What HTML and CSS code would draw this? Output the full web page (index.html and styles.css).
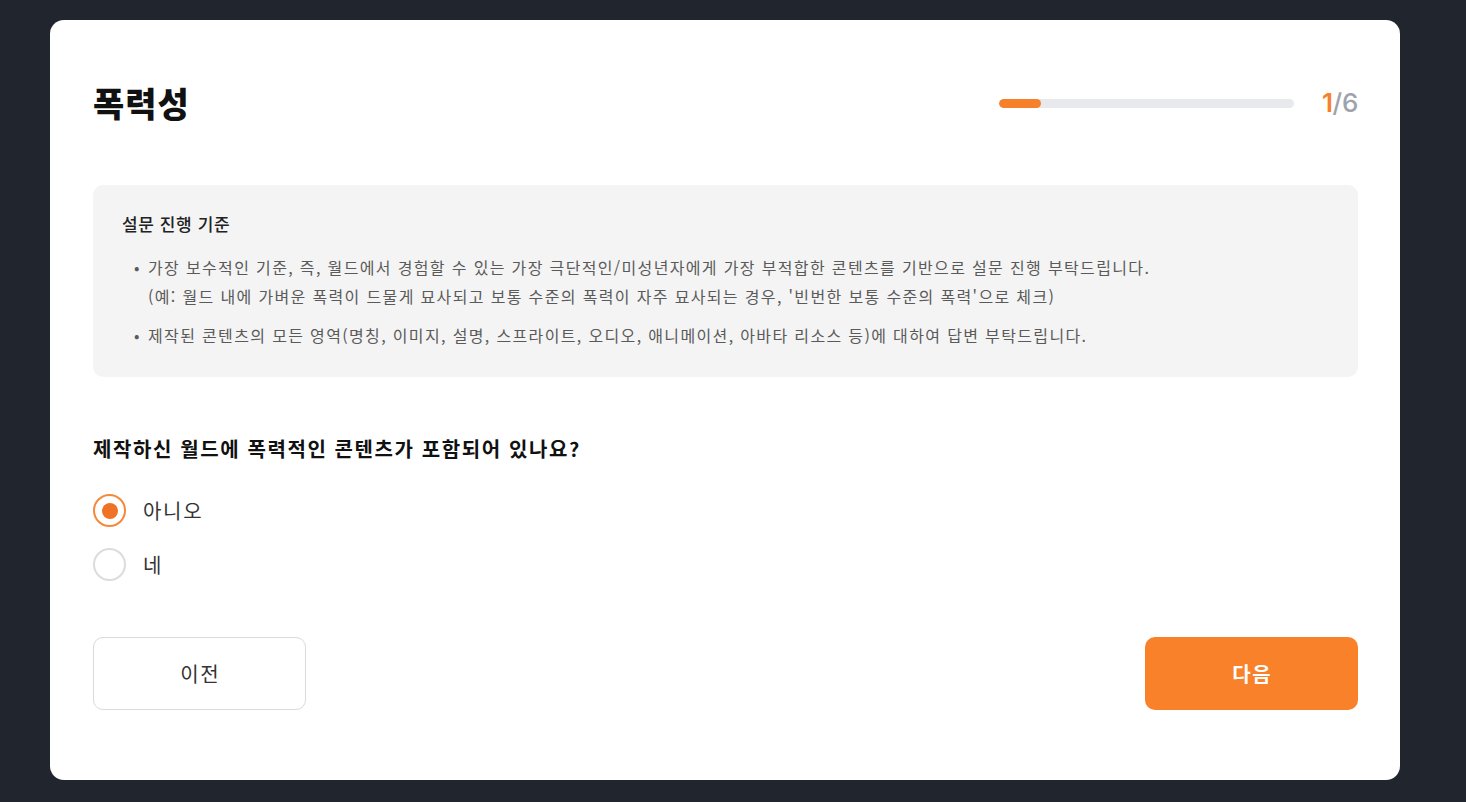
FILE: index.html
```html
<!DOCTYPE html>
<html lang="ko">
<head>
<meta charset="utf-8">
<title>폭력성</title>
<link rel="stylesheet" href="styles.css">
</head>
<body>
<div class="card">
  <div class="header">
    <h1 class="title">폭력성</h1>
    <div class="progress">
      <div class="bar"><div class="fill" style="width: 42px"></div></div>
      <div class="count"><span class="cur">1</span>/6</div>
    </div>
  </div>
  <div class="info">
    <div class="info-title">설문 진행 기준</div>
    <ul class="info-list">
      <li><span>가장 보수적인 기준, 즉, 월드에서 경험할 수 있는 가장 극단적인/미성년자에게 가장 부적합한 콘텐츠를 기반으로 설문 진행 부탁드립니다.<br>(예: 월드 내에 가벼운 폭력이 드물게 묘사되고 보통 수준의 폭력이 자주 묘사되는 경우, '빈번한 보통 수준의 폭력'으로 체크)</span></li>
      <li><span>제작된 콘텐츠의 모든 영역(명칭, 이미지, 설명, 스프라이트, 오디오, 애니메이션, 아바타 리소스 등)에 대하여 답변 부탁드립니다.</span></li>
    </ul>
  </div>
  <div class="question">제작하신 월드에 폭력적인 콘텐츠가 포함되어 있나요?</div>
  <div class="options">
    <label class="option"><span class="radio checked"></span><span class="label">아니오</span></label>
    <label class="option"><span class="radio"></span><span class="label">네</span></label>
  </div>
  <div class="actions">
    <button class="btn btn-prev"><span class="btn-text">이전</span></button>
    <button class="btn btn-next"><span class="btn-text">다음</span></button>
  </div>
</div>
</body>
</html>
```
FILE: styles.css
```css
* { box-sizing: border-box; }
html, body { margin: 0; padding: 0; }
body {
  background: #21252e;
  width: 1466px;
  height: 802px;
  overflow: hidden;
  padding: 20px 0 0 50px;
  font-family: "Noto Sans CJK KR", "Noto Sans", sans-serif;
  color: #222;
}
.card {
  width: 1350px;
  height: 760px;
  background: #fff;
  border-radius: 14px;
  padding: 43px 42px 0 43px;
}
.header {
  height: 80px;
  display: flex;
  align-items: center;
  justify-content: space-between;
}
.title {
  margin: 0;
  font-size: 34px;
  font-weight: 800;
  color: #111;
  line-height: 40px;
  letter-spacing: 1px;
}
.progress {
  display: flex;
  align-items: center;
  gap: 28px;
}
.bar {
  width: 295px;
  height: 9px;
  border-radius: 5px;
  background: #e8e9ed;
  overflow: hidden;
}
.fill {
  height: 100%;
  background: #f7802a;
  border-radius: 5px;
}
.count {
  font-family: Inter, "Open Sans", sans-serif;
  font-size: 26px;
  font-weight: 500;
  color: #9ea3ab;
  line-height: 30px;
  letter-spacing: -0.3px;
}
.count .cur { color: #f7802a; font-weight: 600; }
.info {
  margin-top: 42px;
  background: #f4f4f4;
  border-radius: 10px;
  padding: 27px 29px 27px 29px;
  height: 192px;
}
.info-title {
  font-size: 17px;
  font-weight: 500;
  line-height: 24px;
  color: #222;
  letter-spacing: 0.6px;
}
.info-list {
  list-style: none;
  margin: 17px 0 0 0;
  padding: 0;
}
.info-list li {
  display: flex;
  font-size: 16px;
  line-height: 29px;
  color: #5a5a5a;
  letter-spacing: 1.35px;
}
.info-list li + li { margin-top: 10px; }
.info-list li::before {
  content: "•";
  width: 14px;
  margin-left: 12px;
  flex: none;
  letter-spacing: 0;
  color: #5a5a5a;
}
.question {
  margin-top: 58px;
  font-size: 20px;
  font-weight: 700;
  line-height: 28px;
  color: #111;
  letter-spacing: 1.6px;
}
.options {
  margin-top: 31px;
  display: flex;
  flex-direction: column;
  gap: 21px;
}
.option {
  display: flex;
  align-items: center;
  gap: 17px;
  height: 33px;
}
.radio {
  width: 33px;
  height: 33px;
  border-radius: 50%;
  border: 2px solid #dcdcdc;
  display: flex;
  align-items: center;
  justify-content: center;
  flex: none;
}
.radio.checked { border-color: #f5893a; }
.radio.checked::after {
  content: "";
  width: 16px;
  height: 16px;
  border-radius: 50%;
  background: #f07226;
}
.label {
  font-size: 20px;
  color: #333;
  line-height: 28px;
  letter-spacing: 1.7px;
}
.actions {
  margin-top: 56px;
  display: flex;
  justify-content: space-between;
}
.btn {
  width: 213px;
  height: 73px;
  border-radius: 10px;
  font-family: "Noto Sans CJK KR", "Noto Sans", sans-serif;
  font-size: 20px;
  cursor: pointer;
  padding: 0;
}
.btn-text {
  letter-spacing: 1.5px;
  margin-right: -1.5px;
}
.btn-prev {
  background: #fff;
  border: 1.5px solid #dadada;
  color: #333;
}
.btn-next {
  background: #f8812a;
  border: none;
  color: #fff;
  font-weight: 700;
}
```
